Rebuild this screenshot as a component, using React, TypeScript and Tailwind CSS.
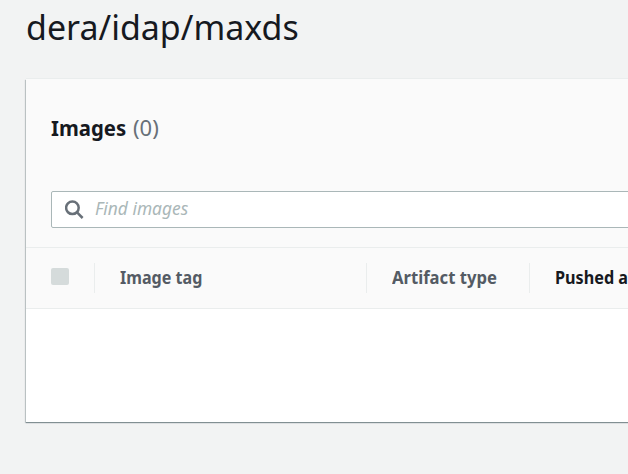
export default function App() {
  return (
    <div className="h-[474px] w-[628px] overflow-hidden bg-[#f2f3f3] font-['Noto_Sans',sans-serif] text-[#16191f]">
      <h1 className="flex h-[79px] items-start whitespace-nowrap pl-[26px] pt-[3px] text-[35px] leading-[48px]">
        <span className="inline-block origin-left scale-x-[0.971]">dera/idap/maxds</span>
      </h1>
      <main className="ml-[26px] h-[343px] w-[640px] bg-white shadow-[0_-1px_0_0_#eaeded,0_1px_1px_0_rgba(0,28,36,0.35),-1px_1px_1px_0_rgba(0,28,36,0.18)]">
        <section className="h-[168px] bg-[#fafafa] px-[25px] pt-[33px]">
          <h2 className="flex h-[30px] items-center whitespace-nowrap text-[22px] font-bold leading-[30px]">
            <span className="w-[82px]">
              <span className="inline-block origin-left scale-x-[0.925]">Images</span>
            </span>
            <span className="font-normal text-[#687078]">(0)</span>
          </h2>
          <div className="mt-[49px] flex h-[37px] w-[650px] items-center rounded-[2px] border border-[#aab7b8] bg-white pl-[13px]">
            <svg className="h-[20px] w-[20px]" viewBox="0 0 20 20" fill="none" stroke="#687078" strokeWidth="2.5">
              <circle cx="7.4" cy="7.8" r="6.3" />
              <path d="M11.8 12.2 17.6 18" />
            </svg>
            <span className="ml-[10px] inline-block origin-left -translate-y-px scale-x-[0.965] text-[18px] italic text-[#aab7b8]">Find images</span>
          </div>
        </section>
        <div className="flex h-[62px] items-center border-y border-[#eaeded] bg-[#fafafa] text-[18px] font-bold text-[#545b64]">
          <span className="mb-[3px] ml-[25px] h-[17px] w-[18px] rounded-[2px] bg-[#d5dbdb]" />
          <span className="ml-[25px] h-[30px] w-px bg-[#eaeded]" />
          <span className="mb-[2px] w-[271px] pl-[25px]">
            <span className="inline-block origin-left scale-x-[0.895]">Image tag</span>
          </span>
          <span className="h-[30px] w-px bg-[#eaeded]" />
          <span className="mb-[2px] w-[162px] whitespace-nowrap pl-[25px]">
            <span className="inline-block origin-left scale-x-[0.925]">Artifact type</span>
          </span>
          <span className="h-[30px] w-px bg-[#eaeded]" />
          <span className="mb-[2px] whitespace-nowrap pl-[25px] text-[#16191f]">
            <span className="inline-block origin-left scale-x-[0.9]">Pushed at</span>
          </span>
        </div>
      </main>
    </div>
  );
}
